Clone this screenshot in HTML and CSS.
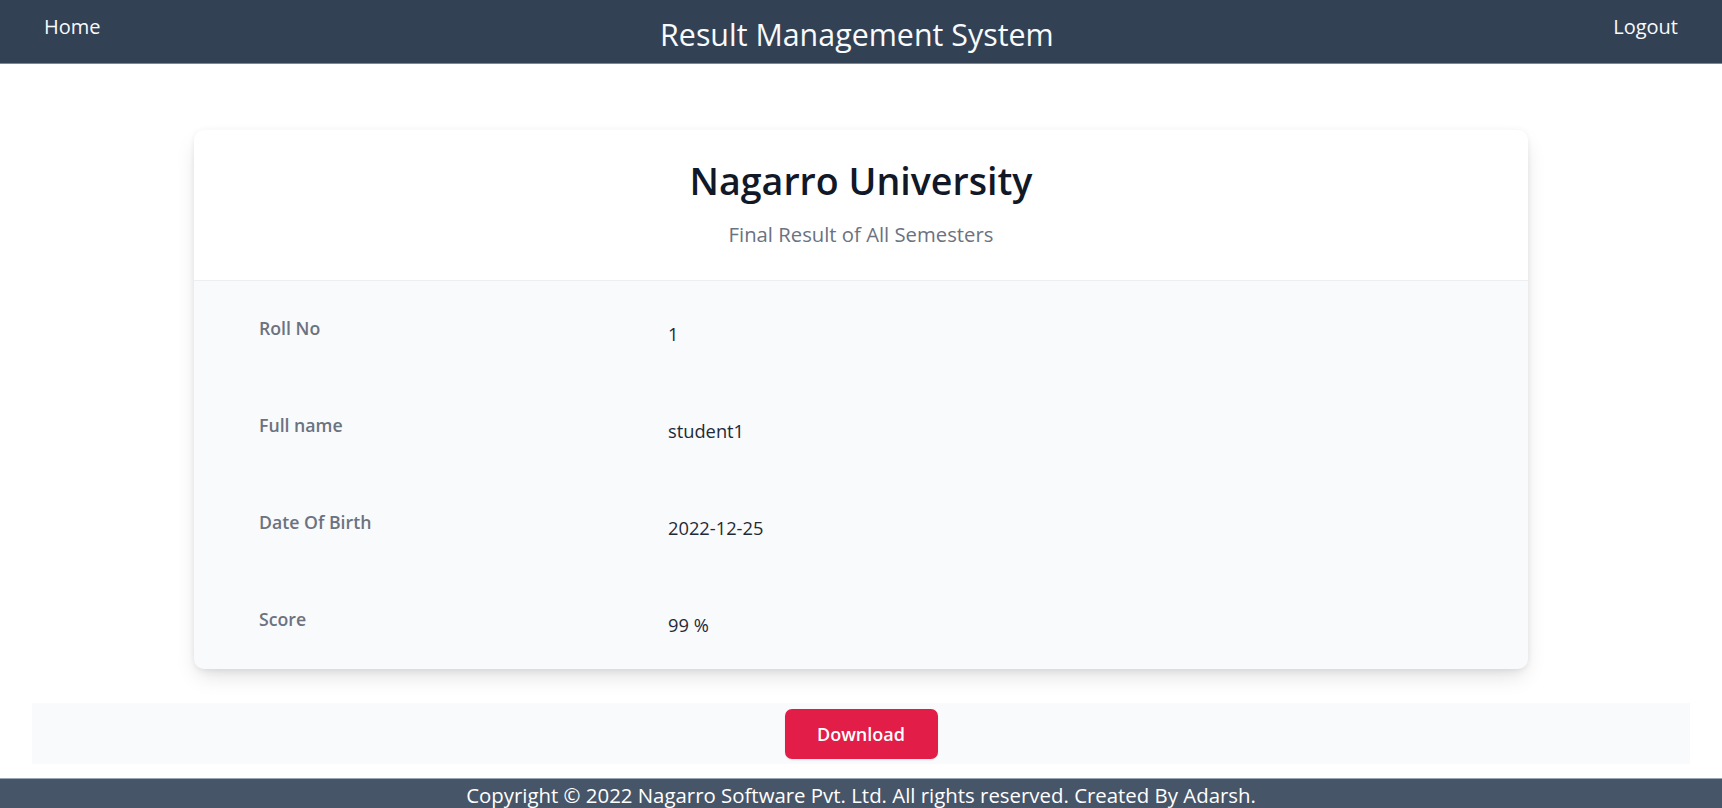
FILE: index.html
```html
<!DOCTYPE html>
<html lang="en">
<head>
<meta charset="utf-8">
<title>Result Management System</title>
<link rel="stylesheet" href="styles.css">
</head>
<body>
<header class="topbar">
  <a class="nav-link" href="#">Home</a>
  <h1 class="app-title">Result Management System</h1>
  <a class="nav-link" href="#">Logout</a>
</header>
<main class="main">
  <section class="card">
    <div class="card-head">
      <h2 class="uni-name">Nagarro University</h2>
      <p class="uni-sub">Final Result of All Semesters</p>
    </div>
    <dl class="details">
      <div class="row"><dt class="label">Roll No</dt><dd class="value">1</dd></div>
      <div class="row"><dt class="label">Full name</dt><dd class="value">student1</dd></div>
      <div class="row"><dt class="label">Date Of Birth</dt><dd class="value">2022-12-25</dd></div>
      <div class="row"><dt class="label">Score</dt><dd class="value">99 %</dd></div>
    </dl>
  </section>
  <div class="actions">
    <button class="btn-download" type="button">Download</button>
  </div>
</main>
<footer class="footer">Copyright © 2022 Nagarro Software Pvt. Ltd. All rights reserved. Created By Adarsh.</footer>
</body>
</html>
```
FILE: styles.css
```css
* { box-sizing: border-box; }
html, body { margin: 0; padding: 0; }
body {
  font-family: "Open Sans", "Noto Sans", "Liberation Sans", sans-serif;
  background: #ffffff;
  color: #111827;
}
.topbar {
  height: 64px;
  background: #334155;
  border-bottom: 1px solid #7b8796;
  display: flex;
  justify-content: space-between;
  align-items: flex-start;
  padding: 0 44px;
}
.nav-link {
  color: #f8fafc;
  text-decoration: none;
  font-size: 20px;
  line-height: 28px;
  margin-top: 13px;
}
.app-title {
  margin: 15px 0 0;
  font-size: 30.4px;
  font-weight: 400;
  line-height: 40px;
  color: #f8fafc;
}
.main {
  padding-top: 66px;
}
.card {
  width: 1334px;
  margin: 0 auto;
  background: #f9fafb;
  border-radius: 10px;
  overflow: hidden;
  box-shadow: 0 10px 22px -4px rgba(0,0,0,0.13), 0 4px 8px -2px rgba(0,0,0,0.06), 0 0 6px rgba(0,0,0,0.04);
}
.card-head {
  background: #ffffff;
  text-align: center;
  padding: 28px 0 32px;
  border-bottom: 1px solid #eceef1;
}
.uni-name {
  margin: 0;
  font-size: 37.6px;
  font-weight: 600;
  line-height: 46px;
  color: #111827;
}
.uni-sub {
  margin: 16px 0 0;
  font-size: 20.3px;
  line-height: 28px;
  color: #6b7280;
}
.details {
  margin: 0;
}
.row {
  display: grid;
  grid-template-columns: 386px 1fr;
  column-gap: 23px;
  padding: 34px 65px 0;
  height: 97px;
}
.label {
  margin: 0;
  font-size: 17.7px;
  font-weight: 600;
  line-height: 26px;
  color: #6b7280;
}
.value {
  margin: 6px 0 0;
  font-size: 18.3px;
  line-height: 26px;
  color: #1f2937;
}
.actions {
  margin: 34px 32px 0;
  height: 61px;
  background: #f9fafb;
  display: flex;
  justify-content: center;
  align-items: center;
}
.btn-download {
  width: 153px;
  height: 50px;
  border: none;
  border-radius: 7px;
  background: #e11d48;
  color: #ffffff;
  font-family: "Open Sans", "Noto Sans", "Liberation Sans", sans-serif;
  font-size: 18px;
  font-weight: 600;
  box-shadow: 0 1px 2px rgba(0,0,0,0.08);
}
.footer {
  margin-top: 14px;
  background: #475569;
  border-top: 1px solid #9aa6b5;
  color: #ffffff;
  text-align: center;
  font-size: 20.4px;
  line-height: 28px;
  padding: 2px 0 8px;
}
```
